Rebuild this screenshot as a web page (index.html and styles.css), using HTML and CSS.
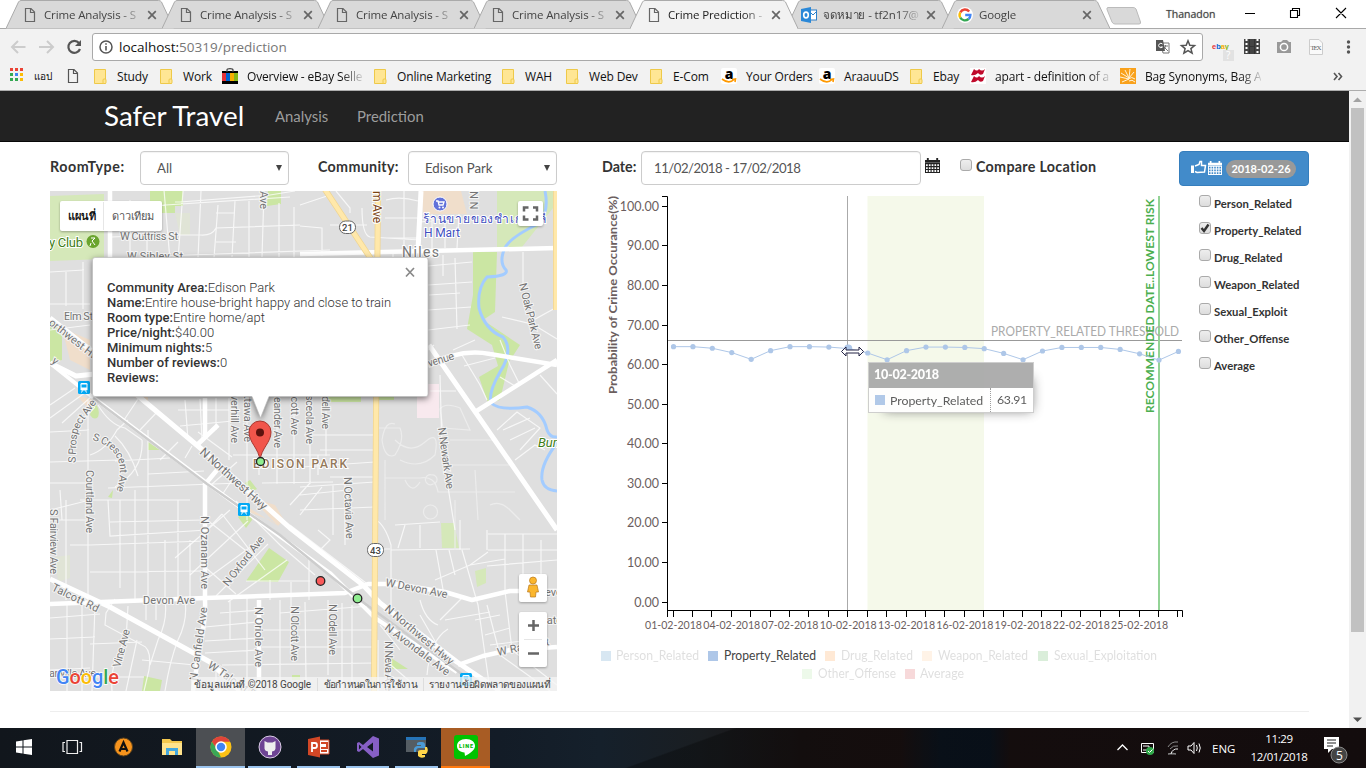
FILE: index.html
```html
<!DOCTYPE html>
<html lang="th">
<head>
<meta charset="utf-8">
<title>Crime Prediction - Safer Travel</title>
<link rel="stylesheet" href="styles.css">
</head>
<body>
<svg class="defs" width="0" height="0">
  <defs>
    <symbol id="file" viewBox="0 0 12 16"><path d="M1.5 1.5H7L10.5 5V14.5H1.500Z M6.500 1.500V5.500H10.500" fill="none" stroke="currentColor" stroke-width="1.2"/></symbol>
    <symbol id="close" viewBox="0 0 10 10"><path d="M1.200 1.200L8.800 8.800M8.800 1.200L1.200 8.800" stroke="currentColor" stroke-width="1.700"/></symbol>
    <symbol id="folder" viewBox="0 0 13 15"><path d="M.5.5H11.500V14.500H.500Z" fill="#ffe694" stroke="#eec949"/><rect x="9" y="10" width="3" height="4.500" rx="1" fill="#ffe694" stroke="#eec949"/></symbol>
    <symbol id="tab-shape" viewBox="0 0 168 29"><path d="M0 28.500L12.500 2Q13.500.5 15 .5H152.500Q154.500.5 155.500 2L168 28.500" fill="currentColor" stroke="#aaa"/></symbol>
    <symbol id="amazon" viewBox="0 0 16 16"><rect width="16" height="16" rx="2" fill="#fff"/><text x="8" y="10.500" text-anchor="middle" font-family="Open Sans" font-weight="800" font-size="14">a</text><path d="M1 11Q8 16.500 13 11.500M11 11.500L14.500 11L14 14" fill="none" stroke="#f90" stroke-width="1.600"/></symbol>
    <symbol id="cal" viewBox="0 0 16 16"><path d="M0 2H16V5H0ZM2 0H4V3H2ZM12 0H14V3H12Z" fill="currentColor"/><path d="M.5 6H15.500V15.500H.500ZM.500 9.200H15.500M.500 12.300H15.500M3.500 6V15.500M6.500 6V15.500M9.500 6V15.500M12.500 6V15.500" fill="none" stroke="currentColor" stroke-width="1.200"/></symbol>
    <symbol id="g" viewBox="0 0 16 16"><circle cx="8" cy="8" r="8" fill="#fff"/><g fill="none" stroke-width="2.400"><path d="M12.200 4.500A5.400 5.400 0 0 0 3.300 5.300" stroke="#ea4335"/><path d="M3.300 5.300A5.400 5.400 0 0 0 3.300 10.700" stroke="#fbbc05"/><path d="M3.300 10.700A5.400 5.400 0 0 0 11.600 12" stroke="#34a853"/><path d="M11.600 12A5.400 5.400 0 0 0 13.400 8H8.200" stroke="#4285f4"/></g></symbol>
    <symbol id="train" viewBox="0 0 12 13"><rect width="12" height="13" rx="1.500" fill="#03a9f4"/><rect x="2.500" y="2" width="7" height="7.500" rx="1.200" fill="#fff"/><path d="M3.500 3.500H8.500V6.500H3.500Z" fill="#03a9f4"/><path d="M3.500 11.500L4.500 9.500M8.500 11.500L7.500 9.500" stroke="#fff"/></symbol>
  </defs>
</svg>

<header class="browser">
  <div class="tabstrip">
    <div class="tab"><svg class="shape"><use href="#tab-shape"/></svg><svg class="fav"><use href="#file"/></svg><span class="tt">Crime Analysis - S</span><svg class="x"><use href="#close"/></svg></div>
    <div class="tab"><svg class="shape"><use href="#tab-shape"/></svg><svg class="fav"><use href="#file"/></svg><span class="tt">Crime Analysis - S</span><svg class="x"><use href="#close"/></svg></div>
    <div class="tab"><svg class="shape"><use href="#tab-shape"/></svg><svg class="fav"><use href="#file"/></svg><span class="tt">Crime Analysis - S</span><svg class="x"><use href="#close"/></svg></div>
    <div class="tab"><svg class="shape"><use href="#tab-shape"/></svg><svg class="fav"><use href="#file"/></svg><span class="tt">Crime Analysis - S</span><svg class="x"><use href="#close"/></svg></div>
    <div class="tab active"><svg class="shape"><use href="#tab-shape"/></svg><svg class="fav"><use href="#file"/></svg><span class="tt">Crime Prediction -</span><svg class="x"><use href="#close"/></svg></div>
    <div class="tab"><svg class="shape"><use href="#tab-shape"/></svg><svg class="fav wide" viewBox="0 0 16 16"><rect x="8" y="3" width="7.500" height="10" fill="#fff" stroke="#2a7fc9"/><path d="M9 5L12 8L16 4" stroke="#2a7fc9" fill="none"/><path d="M0 2L10 0V16L0 14Z" fill="#2a88d8"/><ellipse cx="5" cy="8" rx="2.300" ry="2.900" fill="none" stroke="#fff" stroke-width="1.600"/></svg><span class="tt">จดหมาย - tf2n17@</span><svg class="x"><use href="#close"/></svg></div>
    <div class="tab"><svg class="shape"><use href="#tab-shape"/></svg><svg class="fav wide"><use href="#g"/></svg><span class="tt">Google</span><svg class="x"><use href="#close"/></svg></div>
    <svg class="newtab" width="36" height="18" viewBox="0 0 36 18"><path d="M2 .5H27Q29 .5 30 2L34.500 15Q35 17 33 17H9Q7 17 6 15L1 2.500Q.5.500 2 .500Z" fill="#d9d9d9" stroke="#bbb"/></svg>
    <span class="user">Thanadon</span>
    <svg class="winbtns" width="112" height="28" viewBox="0 0 112 28" fill="none" stroke="#000" stroke-width="1.100"><path d="M1 13.500H11M46.500 10.500H53.500V17.500H46.500ZM48.500 10V8.500H55.500V15.500H54M92 8L102 18M102 8L92 18"/></svg>
  </div>
  <div class="toolbar">
    <svg class="nav" width="82" height="28" viewBox="0 0 82 28" fill="none"><path d="M15.500 14H2.500M8 8L2 14L8 20" stroke="#ccc" stroke-width="2"/><path d="M29 14H42M37 8L43 14L37 20" stroke="#ccc" stroke-width="2"/><path d="M69 10A6 6 0 1 0 70 16" stroke="#555" stroke-width="2.200"/><path d="M71 7V13H65Z" fill="#555"/></svg>
    <div class="omnibox">
      <svg width="14" height="14" viewBox="0 0 14 14"><circle cx="7" cy="7" r="6" fill="none" stroke="#555" stroke-width="1.500"/><path d="M7 6V10.500M7 3.200V4.800" stroke="#555" stroke-width="1.600"/></svg>
      <span class="url">localhost:<i>50319/prediction</i></span>
      <svg class="omnir" width="42" height="16" viewBox="0 0 42 16"><path d="M6 4H14V14H8Z" fill="#fff" stroke="#777"/><path d="M8 7H13M10.500 6V7Q10 10 8 11M9 8L13 12" stroke="#777" fill="none"/><path d="M1 1H8L10 12H1Z" fill="#555"/><path d="M7.500 5A2.200 2.200 0 1 0 7.500 8H5.500" fill="none" stroke="#fff"/><path d="M33 1.800L34.800 6.300L39.500 6.600L35.900 9.600L37.100 14.200L33 11.600L28.900 14.200L30.100 9.600L26.500 6.600L31.200 6.300Z" fill="none" stroke="#555" stroke-width="1.500"/></svg>
    </div>
    <svg class="ext" width="156" height="28" viewBox="0 0 156 28">
      <text x="2" y="16" font-family="Liberation Sans" font-weight="bold" font-size="7.500" textLength="17" lengthAdjust="spacingAndGlyphs"><tspan fill="#e53238">e</tspan><tspan fill="#0064d2">b</tspan><tspan fill="#f5af02">a</tspan><tspan fill="#86b817">y</tspan></text><rect x="13" y="17" width="11" height="11" fill="#e2e2e2"/><text x="16" y="26" fill="#fff" font-size="10" font-family="Open Sans">?</text>
      <rect x="34" y="6" width="16" height="15" fill="#444"/><path d="M36.500 6V21M47.500 6V21" stroke="#fff" stroke-width="2" stroke-dasharray="2 2"/><path d="M39.500 6V21M44.500 6V21M39 13.500H45" stroke="#333"/>
      <path d="M67 9H71L73 7H77L79 9H81V20H67Z" fill="#999"/><circle cx="74" cy="14" r="3.600" fill="#999" stroke="#fff" stroke-width="1.500"/>
      <path d="M99.500 6.500H109L112.500 10V21.500H99.500Z" fill="#fafafa" stroke="#ccc"/><text x="100.500" y="17" font-family="Liberation Serif" font-size="7" fill="#666" textLength="11">TEX</text>
      <g fill="#555"><circle cx="138.500" cy="9" r="1.700"/><circle cx="138.500" cy="14" r="1.700"/><circle cx="138.500" cy="19" r="1.700"/></g>
    </svg>
  </div>
  <div class="bookmarks">
    <span><svg class="b16" viewBox="0 0 16 16"><g><path d="M1 0h3v3H1zM6 0h3v3H6zM11 0h3v3H11zM11 5h3v3H11z" fill="#ea4335"/><path d="M1 5h3v3H1zM1 10h3v3H1zM6 10h3v3H6z" fill="#34a853"/><path d="M6 5h3v3H6z" fill="#4285f4"/><path d="M11 5h3v3H11zM11 10h3v3H11z" fill="#fbbc05"/></g></svg><b class="thai-sm">แอป</b></span>
    <span><svg class="bfile"><use href="#file"/></svg></span>
    <span><svg class="bfold"><use href="#folder"/></svg><b>Study</b></span>
    <span><svg class="bfold"><use href="#folder"/></svg><b>Work</b></span>
    <span><svg class="b16 up" viewBox="0 0 16 16"><path d="M0 3H16V16H0Z"/><path d="M5 4V2Q5 .7 8 .7T11 2V4" fill="none" stroke="#444" stroke-width="1.200"/><path d="M0 5H4V13H0Z" fill="#e53238"/><path d="M4 5H8V13H4Z" fill="#0064d2"/><path d="M8 5H12V13H8Z" fill="#f5af02"/><path d="M12 5H16V13H12Z" fill="#86b817"/></svg><b class="fade">Overview - eBay Selle</b></span>
    <span><svg class="bfold"><use href="#folder"/></svg><b>Online Marketing</b></span>
    <span><svg class="bfold"><use href="#folder"/></svg><b>WAH</b></span>
    <span><svg class="bfold"><use href="#folder"/></svg><b>Web Dev</b></span>
    <span><svg class="bfold"><use href="#folder"/></svg><b>E-Com</b></span>
    <span><svg class="b16"><use href="#amazon"/></svg><b>Your Orders</b></span>
    <span><svg class="b16"><use href="#amazon"/></svg><b>AraauuDS</b></span>
    <span><svg class="bfold"><use href="#folder"/></svg><b>Ebay</b></span>
    <span><svg class="b16" viewBox="0 0 16 16"><rect width="16" height="16" fill="#fff"/><path d="M1 7L4 1Q7 4 9 1Q12 4 15 1L13 6Q10 8 8 5Q5 8 1 7ZM1 14L4 8Q7 11 9 8Q12 11 15 8L13 13Q10 15 8 12Q5 15 1 14Z" fill="#c00a2b"/></svg><b class="fade">apart - definition of a</b></span>
    <span><svg class="b16" viewBox="0 0 16 16"><rect width="16" height="16" fill="#f9a11b"/><path d="M1 5L9 10M5 2L9 10M10 1L9 10M14 4L9 10M0 9L9 11M2 14L9 11M8 11Q12 8 15 11M9 13Q12 11 15 14" fill="none" stroke="#fff3d8" stroke-width="1"/></svg><b class="fade">Bag Synonyms, Bag A</b></span>
    <span class="more"><svg width="10" height="9" viewBox="0 0 10 9"><path d="M1 1L4 4.500L1 8M5.500 1L8.500 4.500L5.500 8" fill="none" stroke="#555" stroke-width="1.600"/></svg></span>
  </div>
</header>

<div class="viewport">
  <div class="page">
    <nav class="navbar"><a class="brand">Safer Travel</a><a class="l1">Analysis</a><a class="l2">Prediction</a></nav>
    <main class="content">
      <section class="left">
        <div class="form">
          <label class="lab-room">RoomType:</label><div class="select"><span>All</span><em></em></div>
          <label class="lab-com">Community:</label><div class="select"><span>Edison Park</span><em></em></div>
        </div>
        <div class="map">
<svg width="507" height="500" viewBox="50 191 507 500">
  <defs>
    <path id="crescent" d="M92 440Q112 445 118 460Q123 472 115 496"/>
    <path id="prospect" d="M75.500 463L76.500 440Q77 430 84 420L103 394"/>
  </defs>
  <rect x="50" y="191" width="507" height="500" fill="#dfdfdf"/>
  <g class="park">
    <path d="M50 196L104 194V259L50 261ZM497 191H557V203L522 247H497ZM441 523H454L459 548H442ZM475 571L486 568V583L477 587Z" fill="#d5e8b9"/>
    <path d="M150 191H183V206H175V213H160L150 205ZM268 191H281V204L267 206ZM473 252H497L495 312L483 320L520 345L509 362L500 400L488 403L479 377L498 366L492 345L467 329L473 295ZM50 318L62 335V360L50 363ZM93 402Q101 408 98 417Q94 421 90 415ZM148 442L160 450H148ZM108 497L113 490L112 498ZM238 517L250 508L252 520L246 528ZM246 581L269 548L289 562L278 582ZM144 676L162 680L160 691H142ZM391 658L408 669H391ZM327 395H361V402H327ZM378 395H394V400H378ZM245 483L250 480L257 489L250 492ZM292 675H300V680H292Z" fill="#cbe6a3"/>
    <path d="M55 557L70 555V578L58 582ZM175 213H190V235H180Z" fill="#e0e4d6"/>
    <path d="M421 191H461L467 214H423ZM62 328L90 340V370L70 360ZM76 395L93 400L88 408ZM130 395L148 397V403ZM250 497L275 505L284 520L278 526ZM238 508L246 506L280 527L270 520Z" fill="#f0decb"/>
    <rect x="417" y="384" width="22" height="34" fill="#f8e9ee"/>
  </g>
  <path d="M545 191Q549 210 540 223Q508 238 504 250Q499 263 506 270Q509 276 487 277Q477 288 479 308Q485 330 503 337Q514 350 500 372Q488 393 491 403Q500 411 527 407Q543 412 547 430Q550 438 557 437M557 443Q540 465 542 480Q544 490 557 491" fill="none" stroke="#a3ccff" stroke-width="3"/>
  <g class="minor">
    <path d="M130 200V252M147 205V256M164 190L170 260M183 191L178 260M201 191L198 258M218 205L214 258M235 201L232 257M249 199V257M264 191L262 257M279 203V257M294 207V260M150 206L290 197M175 202H180L270 195L295 191M170 235H200Q212 236 216 228L300 225M216 213H235M216 242H236M112 237L180 234M160 256L330 250M300 205L330 195L327 191M300 226L322 228V256M330 225L367 225M336 191L350 208V213M362 208Q362 235 370 237L420 240M386 200Q400 196 418 201M385 218H418M383 238H420M404 191V250M393 250V257M432 214V258M445 216V248M459 214L457 248M421 222L450 218"/>
    <path d="M50 272L84 270M66 272V306M83 262V309M50 304H90M50 330L90 325M94 310L94 395M428 266L472 262M428 285L472 282M428 310L471 307M443 255V276M455 258L457 329M429 295L460 293M428 330L470 325M523 252V290M502 317L528 323L557 307M534 325L557 339"/>
    <path d="M50 405L75 388M50 418L86 392M62 423L93 395M75 427L95 407M50 432L89 430M88 400V500M50 462L120 460M90 455Q106 450 117 430L128 420M98 405Q110 425 125 428L142 440M142 440Q144 470 115 487M115 436Q130 450 138 476M115 461L170 458M148 430V480M148 474L204 471M108 488L240 483M80 500H190M108 500L110 536L207 530M66 500V600M88 500V600M120 500V588M135 490V600M148 480V600M165 540V600M178 500V600M190 540V600M204 520L110 522M90 545L205 541M90 572L205 571M70 545H90M50 520H88M90 500L50 510M50 483H88M60 490L62 520"/>
    <path d="M200 399L202 440M185 400L188 440M216 398V430M229 398V460M178 410H229M180 426L233 421M232 457L198 432M140 430L158 411M124 420L138 399M160 460L178 442M185 458L192 446M222 495L232 480M211 485L237 462M233 455H330M247 398V520M259 440V475M277 400V484M294 400V484M310 400V484M326 400V456M304 435H375M320 450H375M302 467L375 462M330 477H375M300 487L375 482M333 485V535M345 480V545M300 495L348 490M300 510L375 507M318 455V475M262 483L333 482M322 487L300 515M310 483L290 505"/>
    <path d="M175 558L230 510M190 575L248 521M205 580L260 540M205 532L222 514M222 514L265 570M236 501L280 545L315 575M205 567L236 594M207 520L245 550M216 596L268 544M228 602L287 560M246 581H310M270 580V600M247 596V691M230 600V640M291 582V650M309 560V600M328 600V675M342 603V691M352 605V691M305 602L306 680M280 600V691M220 613L260 610M205 627L258 622M205 641L258 638M205 653L260 650M222 665L375 663M260 630H375M262 647H375M216 670V691M280 613L370 606M290 525L370 586M318 530L330 540L320 550"/>
    <path d="M50 618L100 614M50 639L95 637M67 604V691M82 605V691M95 605L92 691M90 644L142 642M115 599L106 613L105 625L142 645Q152 648 149 670L144 691M128 606L126 640Q110 660 112 691M137 640L126 691M146 600V620M156 600V620M165 600Q168 620 158 640L150 665M185 600Q188 620 178 640Q170 660 165 691M142 660L195 665M50 670L90 668M90 677H144"/>
    <path d="M376 520Q385 525 391 545V610M376 549H390M395 525L440 522M391 550L470 549M420 525V548M405 525L398 548M436 550L444 595M449 550L455 575M460 520V550M462 550L478 605L490 690M487 530V550M487 566L557 560M488 534H557M505 534V590M523 534V590M541 540V590M488 550H557M435 580L470 565L505 559M470 565L488 552M487 605L500 655M505 591L512 650M445 620L490 612M440 620Q460 600 462 598M448 629Q430 640 427 675M420 600Q425 620 438 625M420 615L440 650M475 620L500 615M485 635L510 628M490 645L530 640M500 655L550 691M512 650L557 685M465 670L500 691M380 625L400 650M385 660L420 690M378 640V691M390 665V691"/>
  </g>
  <g class="faint">
    <path d="M378 428H400Q405 440 395 455Q385 460 382 440Q385 420 395 424M395 440Q410 455 425 442T435 455Q420 470 400 460M385 460V520M385 478H420Q435 475 438 492H515M440 409Q445 402 460 408L470 430L443 428ZM450 440H495M452 465L515 465M455 500V550M475 470L478 520M490 505Q500 500 510 510T520 520M405 480Q412 495 420 482M432 475a4 4 0 1 1 1 9a5 5 0 1 1-1-9M430 505a7 7 0 1 1 1 14a7 7 0 1 1-1-14"/>
  </g>
  <g class="minor"><path d="M497 430L517 412L540 428L520 450M503 430L530 418M510 440L535 428M515 460L535 445L545 450M430 391H456M462 355L480 385L487 400M500 340L510 365L520 385M440 375L442 450L455 530M500 377L515 386M540 375L557 394M453 350L475 340M464 366L495 358M434 345L428 350"/></g>
  <g class="road">
    <path d="M50 363L76 376L95 374M50 318L93 352M112 358L137 395L205 452L290 528L363 585L380 603L457 662L500 691" stroke-width="5"/>
    <path d="M50 363L90 395L207 483L267 527L330 573L375 618L457 672" stroke-width="4"/>
    <path d="M110 191V260M205 398V430L205 437M197 445L218 425M205 483V600Q206 620 200 645L193 691M259 600V691M207 482L217 470" stroke-width="4.500"/>
    <path d="M50 604L205 598L345 593L368 584H395L445 592L472 600L510 591H557M300 254L557 248M458 665L483 656L510 650L557 647M428 366Q460 348 490 354L557 365M475 412L557 360" stroke-width="4.500"/>
    <path d="M50 579L110 607L210 662L240 691M429 345L557 530M421 191L418 250" stroke-width="5"/>
  </g>
  <path d="M93 398L207 484L280 535L360 600L470 680" fill="none" stroke="#cdcdcd" stroke-width="2.500"/>
  <path d="M324 188L373 262M378 191L376 420L374 691M556 191V310" fill="none" stroke="#f0d591" stroke-width="6"/>
  <path d="M324 188L373 262M378 191L376 420L374 691M556 191V310" fill="none" stroke="#ffe8aa" stroke-width="4.500"/>
  <g class="lbl">
    <text x="120" y="240" textLength="58">W Cuttriss St</text><text x="127" y="260" textLength="56">W Sibley St</text><text x="64" y="320" textLength="29">Elm St</text>
    <text transform="translate(48,324) rotate(38)" textLength="66">orthwest Hwy</text><text transform="translate(51,362) rotate(40)">y</text>
    <text transform="translate(260,191) rotate(90)">Ave</text>
    <text class="curve"><textPath href="#prospect">S Prospect Ave</textPath></text>
    <text class="curve"><textPath href="#crescent">S Crescent Ave</textPath></text>
    <text transform="translate(86,470) rotate(90)" textLength="63">Courtland Ave</text><text transform="translate(50,509) rotate(90)" textLength="65">S Fairview Ave</text>
    <text transform="translate(231,395) rotate(90)" textLength="48">verhill Ave</text><text transform="translate(244,395) rotate(90)" textLength="47">ttawa Ave</text><text transform="translate(274,397) rotate(90)" textLength="51">eander Ave</text><text transform="translate(291,394) rotate(90)" textLength="41">lcott Ave</text><text transform="translate(306,395) rotate(90)" textLength="49">sceola Ave</text><text transform="translate(322,396) rotate(90)" textLength="33">dell Ave</text>
    <text transform="translate(199,453) rotate(42)" textLength="86" class="hwy">N Northwest Hwy</text>
    <text transform="translate(201,516) rotate(90)" textLength="73">N Ozanam Ave</text><text transform="translate(228,587) rotate(-52)" textLength="60">N Oxford Ave</text>
    <text x="143" y="604" textLength="52">Devon Ave</text><text transform="translate(51,590) rotate(26)" textLength="51">Talcott Rd</text>
    <text transform="translate(120,668) rotate(-75)" textLength="39">Vine Ave</text><text transform="translate(197,681) rotate(-82)" textLength="74">N Canfield Ave</text><text transform="translate(207,667) rotate(34)" textLength="62">W Talcott Rd</text>
    <text transform="translate(255,607) rotate(90)" textLength="60">N Oriole Ave</text><text transform="translate(291,606) rotate(90)" textLength="55">N Olcott Ave</text><text transform="translate(329,604) rotate(90)" textLength="51">N Odell Ave</text><text transform="translate(385,641) rotate(90)" textLength="50">N Neva Ave</text>
    <text transform="translate(344,477) rotate(88)" textLength="62">N Octavia Ave</text><text transform="translate(438,428) rotate(82)" textLength="62">N Newark Ave</text><text transform="translate(519,284) rotate(76)" textLength="68">N Oak Park Ave</text><text transform="translate(470,191) rotate(90)">N N</text>
    <text transform="translate(429,367) rotate(-17)" textLength="27">venue</text><text transform="translate(385,586) rotate(11)" textLength="63">W Devon Ave</text><text transform="translate(384,610) rotate(40)" textLength="86">N Northwest Hwy</text><text transform="translate(384,629) rotate(37)" textLength="78">N Avondale Ave</text><text transform="translate(498,656) rotate(-12)" textLength="53">W Rand Ct</text><text x="545" y="596">evon</text><text x="544" y="624">lator</text><text x="49" y="677" textLength="47">anville Ave</text>
  </g>
  <g class="lbl big"><text x="402" y="257" textLength="37" class="town">Niles</text><text x="253" y="468" textLength="94" class="brown">EDISON PARK</text><text x="538" y="447" class="green it">Bunker</text><text x="49" y="247" class="green" textLength="34">y Club</text><text x="423" y="223" class="blue" textLength="123">ร้านขายของชำเกาหลี</text><text x="424" y="237" class="blue" textLength="36">H Mart</text><text transform="translate(373,191) rotate(90)" class="dark" textLength="32">m Ave</text></g>
  <circle cx="93" cy="241.500" r="6.500" fill="#6aa42e"/><path d="M91 238H95L92 241L95 245M91 243L90 246" stroke="#fff" fill="none"/>
  <circle cx="440" cy="204" r="7" fill="#6272d9" stroke="#fff"/><path d="M436 201H438L439 205H443L444 202H438" fill="none" stroke="#fff" stroke-width="1.300"/><circle cx="439.500" cy="207.500" r="1" fill="#fff"/><circle cx="443" cy="207.500" r="1" fill="#fff"/>
  <g fill="#fff" stroke="#666"><rect x="339.500" y="221" width="16" height="12.500" rx="6"/><rect x="367.500" y="543.500" width="16" height="13" rx="6"/></g>
  <g font-family="Roboto" font-size="9.500" fill="#444" font-weight="500"><text x="342" y="231">21</text><text x="370" y="553.500">43</text></g>
  <use href="#train" x="78" y="381" width="12" height="13"/><use href="#train" x="238" y="503" width="12" height="13"/><use href="#train" x="460" y="673" width="12" height="13"/>
  <g stroke="#222" stroke-width="1.300"><circle cx="320.500" cy="581" r="4.300" fill="#f95a5a"/><circle cx="357.500" cy="598.500" r="4.300" fill="#90ee90"/></g>
  <g class="infowin"><path d="M95 257.500H426Q428 257.500 428 260V394Q428 396.500 426 396.500H269L260.500 418L252 396.500H95Q92.500 396.500 92.500 394V260Q92.500 257.500 95 257.500Z" fill="#fff" stroke="#bbb" stroke-width=".7"/></g>
  <path d="M406 268L414 276.500M414 268L406 276.500" stroke="#888" stroke-width="1.700"/>
  <path d="M260 461C259 448 249 443 249 432A11 11 0 0 1 271 432C271 443 261 448 260 461Z" fill="#f1554b" stroke="#a9372f"/><circle cx="260" cy="432.500" r="4" fill="#5c120e"/>
  <circle cx="260.500" cy="461.500" r="4" fill="#90ee90" stroke="#222" stroke-width="1.300"/>
  <g class="glogo"><text x="56" y="684" textLength="63" lengthAdjust="spacingAndGlyphs"><tspan fill="#4285f4">G</tspan><tspan fill="#ea4335">o</tspan><tspan fill="#fbbc05">o</tspan><tspan fill="#4285f4">g</tspan><tspan fill="#34a853">l</tspan><tspan fill="#ea4335">e</tspan></text></g>
  <rect x="191" y="677" width="366" height="14" fill="#f5f5f5" opacity=".75"/>
  <g class="credit"><text x="194" y="687.500" textLength="117">ข้อมูลแผนที่ ©2018 Google</text><text x="323" y="687.500" textLength="94">ข้อกำหนดในการใช้งาน</text><text x="429" y="687.500" textLength="122">รายงานข้อผิดพลาดของแผนที่</text><path d="M317.500 678V691M423.500 678V691" stroke="#ddd"/></g>
  <g class="ctl"><rect x="60" y="201" width="102" height="30" rx="2"/><rect x="518" y="201" width="25" height="25" rx="2"/><rect x="519" y="574" width="28" height="28" rx="2"/><rect x="519" y="612" width="28" height="55" rx="2"/></g>
  <path d="M103.500 202V230M524 639.500H542" stroke="#e6e6e6"/>
  <g font-family="Roboto, Open Sans, sans-serif" font-size="11"><text x="68" y="220" stroke="#000" stroke-width=".3" textLength="28">แผนที่</text><text x="112" y="220" fill="#565656" textLength="42">ดาวเทียม</text></g>
  <path d="M524 211.500V207.500H528.500M533 207.500H537V211.500M537 215.500V219.500H533M528.500 219.500H524V215.500M528 625.500H539M533.500 620V631M528 653.500H539" stroke="#666" stroke-width="2.500" fill="none"/>
  <circle cx="533" cy="580.500" r="3.500" fill="#fbb62d" stroke="#b7771b" stroke-width=".7"/><path d="M529 585H537L538.500 592H536L535.500 597H530.500L530 592H527.500Z" fill="#fbb62d" stroke="#b7771b" stroke-width=".7"/>
</svg>
          <div class="info"><p><b>Community Area:</b>Edison Park</p><p><b>Name:</b>Entire house-bright happy and close to train</p><p><b>Room type:</b>Entire home/apt</p><p><b>Price/night:</b>$40.00</p><p><b>Minimum nights:</b>5</p><p><b>Number of reviews:</b>0</p><p><b>Reviews:</b></p></div>
        </div>
      </section>
      <section class="right">
        <div class="form">
          <label class="lab-date">Date:</label><div class="date">11/02/2018 - 17/02/2018</div>
          <svg class="calicon" width="15" height="15"><use href="#cal"/></svg>
          <i class="cb cmp"></i><label class="lab-cmp">Compare Location</label>
          <div class="rec"><svg width="16" height="15" viewBox="0 0 16 15"><path d="M0 5.500H3V13H0Z" fill="#fff"/><path d="M4 6L8 4.500L9 1.500H10.500V5.500H14.500L13.500 12L6 12.500L4 11.500" fill="none" stroke="#fff" stroke-width="1.500"/></svg><svg width="14" height="14"><use href="#cal"/></svg><span>2018-02-26</span></div>
        </div>
        <div class="chartrow">
          <svg id="chart" width="585" height="490" viewBox="600 194 585 490"></svg>
          <ul class="cats"><li><i class="cb"></i>Person_Related</li><li><i class="cb on"><svg viewBox="0 0 12 12"><path d="M2.500 6L5 9L9.500 2.500" fill="none" stroke="#333" stroke-width="2.400"/></svg></i>Property_Related</li><li><i class="cb"></i>Drug_Related</li><li><i class="cb"></i>Weapon_Related</li><li><i class="cb"></i>Sexual_Exploit</li><li><i class="cb"></i>Other_Offense</li><li><i class="cb"></i>Average</li></ul>
          <div class="tip"><div class="th">10-02-2018</div><div class="td"><i></i><span>Property_Related</span><em>63.91</em></div></div>
        </div>
      </section>
    </main>
    <hr>
  </div>
  <div class="scroll"><svg width="17" height="17" viewBox="0 0 17 17"><path d="M4 11L8.500 6.500L13 11Z" fill="#a3a3a3"/></svg><div class="thumb"></div><svg width="17" height="17" viewBox="0 0 17 17"><path d="M4 6.500L8.500 11L13 6.500Z" fill="#505050"/></svg></div>
</div>

<footer class="taskbar">
  <div class="ti"><svg viewBox="0 0 24 24"><path d="M3 6.500L9.500 5.500V11.500H3ZM10.500 5.300L19 4V11.500H10.500ZM3 12.500H9.500V18.500L3 17.500ZM10.500 12.500H19V20L10.500 18.700Z" fill="#fff"/></svg></div>
  <div class="ti"><svg viewBox="0 0 24 24"><path d="M5 5.500H15.500V18.500H5ZM3 7.500H1V16.500H3M17.500 7.500H19.500V16.500H17.500" fill="none" stroke="#eee" stroke-width="1.200"/></svg></div>
  <div class="ti"><svg viewBox="0 0 24 24"><circle cx="12.500" cy="12" r="9" fill="#f7941d" stroke="#5f421b"/><path d="M8.500 16.500L12.500 7.500L16.500 16.500M10.500 14H16" fill="none" stroke="#111" stroke-width="2.200"/></svg></div>
  <div class="ti"><svg viewBox="0 0 24 24"><path d="M2 4H10L12 6H22V20H2Z" fill="#f4c84e"/><path d="M2 8H22V20H2Z" fill="#ffe38c"/><path d="M6 20V13H18V20H15V16H9V20Z" fill="#43a7df"/></svg></div>
  <div class="ti hot on"><svg viewBox="0 0 24 24"><circle cx="12" cy="12" r="10.500" fill="#fbc116"/><path d="M2.900 6.750A10.500 10.500 0 0 1 21.100 6.750H12L8 15Z" fill="#e0443a"/><path d="M2.900 6.750L8.500 15L12 22.500A10.500 10.500 0 0 1 2.900 6.750Z" fill="#3aa757"/><circle cx="12" cy="12" r="5" fill="#4285f4" stroke="#fff" stroke-width="1.600"/></svg></div>
  <div class="ti on"><svg viewBox="0 0 24 24"><circle cx="12" cy="12" r="11" fill="#6e4494" stroke="#d9cbe5"/><path d="M6.500 6L9.500 7.500H14.500L17.500 6V12Q18 16 14 16.500V20H10V16.500Q6 16 6.500 12Z" fill="#eee"/></svg></div>
  <div class="ti on"><svg viewBox="0 0 24 24"><path d="M9 5H22V19H9Z" fill="#fff" stroke="#d24726"/><path d="M14 8H20V13H14M14 16H20" stroke="#d24726" stroke-width="2" fill="none"/><path d="M1 4L13 1.500V22.500L1 20Z" fill="#d24726"/><path d="M5 17V8H8Q10 8 10 10.500T8 13H5" stroke="#fff" stroke-width="1.800" fill="none"/></svg></div>
  <div class="ti on"><svg viewBox="0 0 24 24"><path d="M17 1L23 3.500V20.500L17 23L7 14L3 17L1 16V8L3 7L7 10ZM17 7.500L11 12L17 16.500ZM3 9.500V14.500L5.500 12Z" fill="#865fc5" fill-rule="evenodd"/></svg></div>
  <div class="ti on"><svg viewBox="0 0 24 24"><path d="M1 2H21V17H1Z" fill="#555d63"/><path d="M1 2H21V5H1Z" fill="#2674b8"/><path d="M14 7H17Q20 7 20 10V13H14Q11 13 11 17H9Q8 12 12 11H16V10H12V8Z" fill="#4b9bd6"/><path d="M20 12H22Q24 16 21 19H17V20H20V22Q16 24 13 21V17Q13 15 16 15H20Z" fill="#ffd64a"/></svg></div>
  <div class="ti line"><svg viewBox="0 0 24 24"><rect width="24" height="24" rx="3" fill="#00c300"/><path d="M12 4C6.500 4 3 7 3 11C3 14.500 6 17 10.500 17.500L11 21C16 18.500 21 15 21 11C21 7 17.500 4 12 4Z" fill="#fff"/><text x="5" y="13" font-size="5.500" font-family="Roboto" font-weight="900" fill="#00b900" textLength="14">LINE</text></svg></div>
  <div class="tray">
    <svg width="88" height="24" viewBox="0 0 88 24" fill="none" stroke="#fff"><path d="M1.500 14L6.500 9L11.500 14" stroke-width="1.300"/><path d="M25.500 7.500H37.500V16.500H25.500ZM27 10H33V14H27"/><circle cx="34" cy="15" r="4" fill="#2fa849" stroke="none"/><path d="M32 15L33.500 16.500L36.500 13.500"/><path d="M52 18L60 18A9 9 0 0 0 52 18M54 13A8 8 0 0 1 62 10M52 11A10 10 0 0 1 62 6" stroke="#8b8b8b"/><path d="M55 18A6 6 0 0 1 62 13" stroke="#eee"/><path d="M72 10H75L78 6.500V17.500L75 14H72ZM80.500 9Q82 12 80.500 15M83 7.500Q85.500 12 83 16.500"/></svg>
    <span class="eng">ENG</span><div class="clock">11:29<br>12/01/2018</div>
    <svg class="note" width="28" height="30" viewBox="0 0 28 30"><path d="M1 2H16V14H9L5 18V14H1Z" fill="#fff"/><path d="M4 5H13M4 8H13M4 11H10" stroke="#222"/><circle cx="16" cy="20" r="8" fill="#444" stroke="#888"/><text x="13" y="24.500" font-size="12" fill="#fff" font-family="Open Sans">5</text></svg>
  </div>
</footer>
<script src="chart.js"></script>
</body>
</html>
```
FILE: chart.js
```js
const svg = document.getElementById('chart');
const X = i => 673.5 + i * 19.42;
const Y = v => 601.5 - v * 3.957;
const values = [64.4, 64.4, 64, 62.9, 61.2, 63.4, 64.4, 64.4, 64.3, 63.91, 62.8, 61.1, 63.4, 64.3, 64.3, 64.2, 63.9, 62.7, 61.1, 63.3, 64.2, 64.2, 64.2, 63.7, 62.6, 61, 63.2];
let out = '<rect x="867.5" y="196" width="116.5" height="414" fill="#f5f9ea"/>';
out += '<path d="M847.500 196V610" stroke="#aaa"/><path d="M668 340.500H1182" stroke="#999"/>';
out += '<path d="M1159 196V610" stroke="#93d396" stroke-width="2"/>';
out += '<path d="M662 196.500H667.500V610.500H1182.500V617M667.500 610V617" fill="none" stroke="#000"/>';
for (let v = 0; v <= 100; v += 10) {
  const y = Math.round(Y(v)) + .5;
  out += `<path d="M662 ${y}H667" stroke="#000"/><text x="659" y="${y + 4}" class="ylab">${v.toFixed(2)}</text>`;
}
for (let i = 0; i < 27; i++) {
  out += `<path d="M${Math.round(X(i)) - .5} 610V617" stroke="#000"/>`;
  if (i % 3 === 0 && i < 25) {
    const d = String(i + 1).padStart(2, '0');
    out += `<text x="${X(i) - 28.500}" y="628.500" textLength="57" lengthAdjust="spacingAndGlyphs" class="xlab">${d}-02-2018</text>`;
  }
}
out += '<text transform="translate(617,394) rotate(-90)" textLength="198" lengthAdjust="spacingAndGlyphs" class="axis-title">Probability of Crime Occurance(%)</text>';
out += '<text x="991" y="335.500" textLength="188" lengthAdjust="spacingAndGlyphs" class="thr">PROPERTY_RELATED THRESHOLD</text>';
out += '<text transform="translate(1154,413) rotate(-90)" textLength="214" lengthAdjust="spacingAndGlyphs" class="recdate">RECOMMENDED DATE..LOWEST RISK</text>';
out += `<polyline points="${values.map((v, i) => X(i) + ',' + Y(v)).join(' ')}" fill="none" stroke="#aec7e8"/>`;
values.forEach((v, i) => { out += `<circle cx="${X(i)}" cy="${Y(v)}" r="${i === 9 ? 4 : 2.600}" fill="#aec7e8"/>`; });
out += '<path d="M841.500 351.500L846 347V350H859V347L863.500 351.500L859 356V353H846V356Z" fill="#fff" stroke="#224"/>';
const legend = [['Person_Related', 601, 616, 83, 656, '#1f77b4'], ['Property_Related', 708, 724, 92, 656, '#aec7e8'], ['Drug_Related', 825, 841, 72, 656, '#ff7f0e'], ['Weapon_Related', 922, 938, 90, 656, '#ffbb78'], ['Sexual_Exploitation', 1038, 1054, 103, 656, '#2ca02c'], ['Other_Offense', 802, 818, 78, 674, '#98df8a'], ['Average', 905, 920, 44, 674, '#d62728']];
legend.forEach(([t, sx, tx, w, y, c], i) => {
  out += `<g opacity="${i === 1 ? 1 : .17}"><rect x="${sx}" y="${y - 5}" width="10" height="10" fill="${c}"/><text x="${tx}" y="${y + 4}" textLength="${w}" lengthAdjust="spacingAndGlyphs" class="leg">${t}</text></g>`;
});
svg.innerHTML = out;
```
FILE: styles.css
```css
* { box-sizing: border-box; }
body { margin: 0; width: 1366px; height: 768px; overflow: hidden; background: #fff; font-family: Lato, "Open Sans", sans-serif; display: flex; flex-direction: column; }
.defs { position: absolute; }
.browser { height: 91px; flex: none; background: #f2f2f2; border-bottom: 1px solid #adadad; font-family: "Open Sans", "Noto Sans", sans-serif; font-size: 12px; }
.tabstrip { height: 29px; padding-left: 6px; display: flex; background: #fff; border-bottom: 1px solid #a9a9a9; }
.tab { width: 168px; height: 29px; margin-right: -12px; flex: none; position: relative; display: flex; align-items: center; padding-left: 18px; color: #444; }
.tab .shape { position: absolute; left: 0; top: 0; width: 168px; height: 29px; color: #d9d9d9; }
.tab.active { z-index: 2; color: #222; }
.tab.active .shape { color: #f2f2f2; }
.tab.active::after { content: ""; position: absolute; left: 1px; right: 1px; bottom: 0; height: 1px; background: #f2f2f2; }
.tab .fav { position: relative; width: 12px; height: 16px; color: #666; margin-right: 8px; }
.tab .fav.wide { width: 16px; margin: 0 6px 0 -3px; }
.tt { position: relative; width: 97px; height: 18px; line-height: 17px; white-space: nowrap; font-size: 11.5px; letter-spacing: -.12px; -webkit-mask-image: linear-gradient(90deg, #000 78%, rgba(0,0,0,.15)); }
.tab .x { position: relative; width: 10px; height: 10px; margin-left: 6px; color: #666; }
.newtab { margin: 7px 0 0 8px; flex: none; }
.user { width: 50px; margin: 8px 0 0 24px; font-size: 10.5px; line-height: 12px; color: #444; text-shadow: 0 0 1px #888; }
.winbtns { margin-left: 28px; flex: none; }
.toolbar { display: flex; height: 33px; padding: 4px 0 0 10px; }
.omnibox { width: 1111px; height: 28px; border: 1px solid #a9a9a9; border-radius: 3px; background: #fff; display: flex; align-items: center; padding: 0 5px 0 6px; }
.url { margin-left: 6px; font-size: 13.5px; color: #111; }
.url i { color: #777; font-style: normal; }
.omnir { margin-left: auto; }
.ext { margin-left: 7px; }
.bookmarks { height: 28px; padding-left: 9px; display: grid; grid-template-columns: 57px 28px 66px 62px 152px 128px 64px 84px 71px 98px 91px 60px 150px 213px 24px; align-items: center; }
.bookmarks span { display: flex; align-items: center; height: 27px; white-space: nowrap; }
.bookmarks b { font-weight: 400; font-size: 12px; color: #111; letter-spacing: -.15px; }
.b16 { width: 16px; height: 16px; margin-right: 9px; flex: none; }
.bfold { width: 13px; height: 15px; margin-right: 10px; flex: none; }
.bookmarks .thai-sm { font-size: 10px; }
.bfile { width: 14px; height: 16px; color: #555; }
.fade { -webkit-mask-image: linear-gradient(90deg, #000 82%, rgba(0,0,0,.15)); }
.viewport { display: flex; height: 637px; flex: none; }
.page { width: 1349px; }
.navbar { height: 51px; background: #222; border-bottom: 1px solid #080808; display: flex; align-items: center; padding-left: 104px; color: #9d9d9d; font-size: 14.9px; }
.brand { color: #fff; font-size: 27.8px; line-height: 40px; width: 171px; }
.l1 { width: 82px; }
.content { display: flex; padding: 9px 40px 0 50px; height: 569px; }
.left { width: 507px; margin-right: 45px; }
.right { width: 707px; }
.form { display: flex; height: 40px; align-items: flex-start; color: #333; font-size: 14.3px; }
.form label { font-weight: 700; line-height: 31px; white-space: nowrap; flex: none; }
.form .lab-room { width: 90px; letter-spacing: .55px; }
.form .lab-com { width: 119px; padding-left: 29px; letter-spacing: .3px; }
.select, .date { height: 34px; width: 149px; border: 1px solid #ccc; border-radius: 4px; font-size: 13.2px; line-height: 33px; color: #555; padding: 0 6px 0 16px; display: flex; justify-content: space-between; align-items: center; box-shadow: inset 0 1px 1px rgba(0,0,0,.05); }
.select em { border: 3.5px solid transparent; border-top: 6px solid #444; border-bottom: 0; }
.lab-date { width: 39px; }
.date { width: 280px; padding-left: 12px; letter-spacing: -.5px; flex: none; }
.calicon { margin: 7px 0 0 4px; color: #222; flex: none; }
.cb { display: inline-block; width: 12px; height: 12px; border: 1px solid #aaa; border-radius: 3px; background: linear-gradient(#eee, #ddd); flex: none; }
.cb svg { width: 12px; height: 12px; display: block; margin: -1px; }
.cmp { margin: 8px 4px 0 20px; }
.form .lab-cmp { width: 203px; letter-spacing: .3px; }
.rec { width: 130px; height: 35px; flex: none; border: 1px solid #357ebd; border-radius: 4px; background: #428bca; display: flex; align-items: center; padding-left: 11px; color: #fff; font-weight: 700; font-size: 11px; }
.rec svg { margin-top: -2px; }
.rec svg:nth-child(2) { margin: -2px 4px 0 1px; }
.rec span { width: 70px; height: 18px; line-height: 18px; border-radius: 9px; background: #999; text-align: center; }
.map { position: relative; width: 507px; height: 500px; overflow: hidden; }
.map > svg { display: block; }
.minor path { fill: none; stroke: #fff; stroke-width: 1.2; opacity: .75; }
.faint path { fill: none; stroke: #ececec; stroke-width: 1.2; }
.road path { fill: none; stroke: #fff; stroke-linejoin: round; }
.lbl text { font-family: Roboto, sans-serif; font-size: 11px; fill: #737373; stroke: #f4f4f4; stroke-width: 2px; paint-order: stroke; }
.lbl .hwy { font-size: 12px; }
.lbl .curve { font-size: 10.5px; letter-spacing: -.35px; }
.lbl.big text { font-size: 12px; fill: #777; stroke: #fff; }
.lbl.big .town { font-size: 14px; }
.lbl.big .brown { fill: #93785a; font-weight: 500; }
.lbl.big .green { fill: #3d7d16; font-size: 13px; }
.lbl.big .it { font-style: italic; }
.lbl.big .blue { fill: #3f4fbf; }
.lbl.big .dark { fill: #7a4212; }
.infowin { filter: drop-shadow(0 2px 3px rgba(0,0,0,.5)); }
.ctl { fill: #fff; filter: drop-shadow(0 1px 1px rgba(0,0,0,.3)); }
.glogo text { font-family: Roboto, sans-serif; font-size: 21px; font-weight: 500; stroke: #fff; stroke-width: 1.5px; paint-order: stroke; }
.credit text { font-family: Roboto, sans-serif; font-size: 10px; fill: #444; }
.info { position: absolute; left: 57px; top: 89px; font: 300 13px/15px Roboto, sans-serif; color: #333; }
.info p { margin: 0; white-space: nowrap; }
.info b { font-weight: 500; }
.chartrow { position: relative; display: flex; margin-left: -2px; padding-top: 3px; }
#chart { flex: none; }
#chart text { font-family: Lato, sans-serif; fill: #6b5e5e; font-size: 12.5px; }
#chart .ylab { text-anchor: end; font-size: 12.5px; }
#chart .xlab { font-size: 11px; }
#chart .axis-title { font-weight: 700; font-size: 12.2px; }
#chart .thr { fill: #aaa; font-size: 13px; }
#chart .recdate { fill: #4caf50; font-weight: 700; font-size: 12.2px; }
#chart .leg { fill: #444; font-size: 12.5px; }
.cats { margin: -4px 0 0 14px; padding: 0; list-style: none; color: #333; font-size: 11.3px; font-weight: 700; }
.cats li { height: 27px; display: flex; align-items: center; }
.cats .cb { margin: -5px 3px 0 0; }
.tip { position: absolute; left: 268px; top: 171px; width: 166px; height: 51px; border: 1px solid #ccc; box-shadow: 7px 7px 12px -9px #777; color: #555; background: #fff; opacity: .95; font-size: 12.3px; }
.th { background: #aaa; color: #fff; font-weight: 900; font-size: 12.6px; height: 25px; line-height: 24px; padding-left: 5px; letter-spacing: -.3px; }
.td { display: flex; height: 24px; align-items: center; padding-left: 6px; }
.td i { width: 10px; height: 10px; background: #aec7e8; margin-right: 5px; }
.td span { width: 100px; white-space: nowrap; }
.td em { font-style: normal; border-left: 1px dotted #999; height: 24px; line-height: 24px; padding-left: 6px; letter-spacing: -.3px; }
hr { margin: 0 40px 0 50px; border: 0; border-top: 1px solid #eee; }
.scroll { width: 17px; background: #f1f1f1; display: flex; flex-direction: column; }
.scroll svg:last-child { margin-top: auto; }
.thumb { width: 13px; height: 524px; margin: 0 2px; background: #c1c1c1; }
.taskbar { height: 40px; display: flex; background: linear-gradient(160deg, transparent 49.7%, rgba(0,0,0,.3) 50%), linear-gradient(90deg, #11161c 0, #131c27 500px, #15202b 600px, #1a1e22 700px, #1b1414 800px, #1d1313 900px, #0d1722 940px, #0c1622 990px, #1c1213 1010px, #1b1112 1366px); }
.ti { width: 49px; height: 40px; display: flex; align-items: center; justify-content: center; border-bottom: 2px solid transparent; background-clip: padding-box; }
.ti svg { width: 24px; height: 24px; }
.ti.on { border-style: solid; border-width: 0 0 2px; border-image: linear-gradient(90deg, transparent 4px, #9bc4ee 4px 45px, transparent 45px) 1; }
.ti.hot { background: #4c4f53; border-image: none; border-color: #9bc4ee; }
.ti.line { background: #a85c24; border-bottom-color: #ff7a10; background-clip: border-box; }
.tray { margin-left: auto; display: flex; align-items: center; color: #fff; font: 12px "Open Sans", sans-serif; width: 250px; }
.eng { margin-left: 8px; width: 24px; font-size: 11.5px; }
.clock { width: 62px; margin: 0 13px 0 12px; text-align: center; font-size: 11.5px; line-height: 18px; letter-spacing: -.4px; white-space: nowrap; }
.note { margin-top: 4px; }
```
